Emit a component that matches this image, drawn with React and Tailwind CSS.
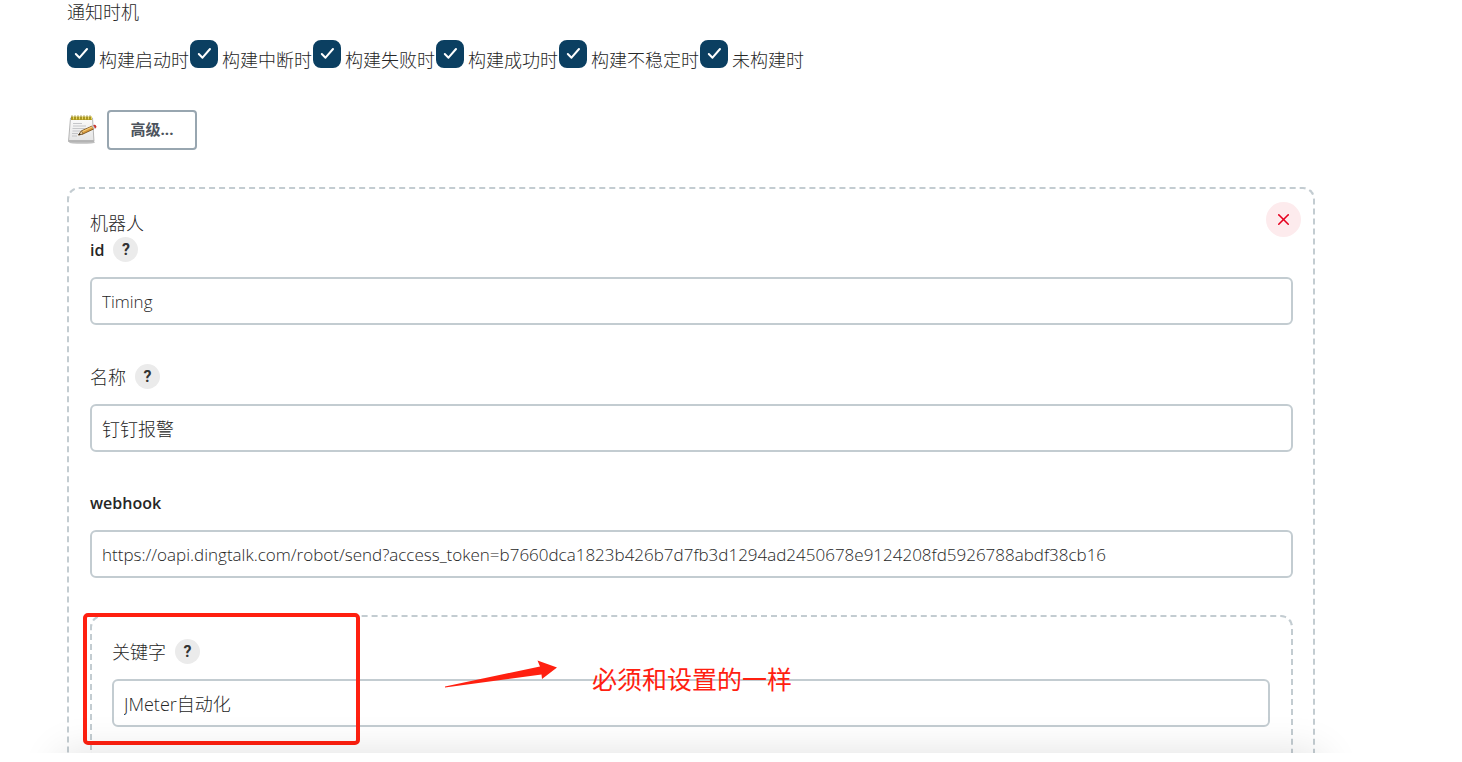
import React from 'react';
import { X } from 'lucide-react';

const triggers = [
  { id: 'start', label: '构建启动时' },
  { id: 'abort', label: '构建中断时' },
  { id: 'failure', label: '构建失败时' },
  { id: 'success', label: '构建成功时' },
  { id: 'unstable', label: '构建不稳定时' },
  { id: 'not-built', label: '未构建时' },
];

const TriggerCheckbox = ({ id, label }) => (
  <div className="flex gap-1">
    <span className="relative h-7 w-7 shrink-0">
      <input
        id={id}
        type="checkbox"
        defaultChecked
        className="peer block h-7 w-7 appearance-none rounded-lg border-2 border-[#c3ccd1] checked:border-[#0b3f61] checked:bg-[#0b3f61]"
      />
      <svg
        viewBox="0 0 28 28"
        fill="none"
        className="pointer-events-none absolute inset-0 hidden h-7 w-7 peer-checked:block"
      >
        <path d="M8.8 14l3.700 3.700 7.500-8.700" stroke="#fff" strokeWidth="2" strokeLinecap="round" strokeLinejoin="round" />
      </svg>
    </span>
    <label htmlFor={id} className="pt-2 leading-6 whitespace-nowrap">
      {label}
    </label>
  </div>
);

const NotepadIcon = () => (
  <svg viewBox="0 0 32 32" className="h-8 w-8 shrink-0">
    <defs>
      <linearGradient id="paper" x1="0" y1="0" x2="0" y2="1">
        <stop offset="0" stopColor="#fbfbfb" />
        <stop offset="1" stopColor="#e4e4e4" />
      </linearGradient>
    </defs>
    <ellipse cx="15" cy="28.500" rx="13" ry="1.300" fill="#000" opacity="0.25" />
    <path d="M3.500 4h22l1.500 23.500H1.500z" fill="url(#paper)" stroke="#a5a5a5" strokeWidth="0.8" />
    <path d="M2 26h24.900l.1 1.500H1.500z" fill="#b5b5b5" />
    <path d="M6 9.500h9M6 12h13M5.500 14.500h13M5.500 17h8M5 19.500h6M5 22h5" stroke="#bfc1c4" strokeWidth="0.9" />
    <path d="M4 3h21v3H4z" fill="#c9b32c" />
    <path d="M5 1.500v4.500M8 1.500v4.500M11 1.500v4.500M14 1.500v4.500M17 1.500v4.500M20 1.500v4.500M23 1.500v4.500" stroke="#96841a" strokeWidth="1.200" />
    <path d="M6.500 2v3M9.500 2v3M12.500 2v3M15.500 2v3M18.500 2v3M21.500 2v3M24.500 2v3" stroke="#efe07a" strokeWidth="0.8" />
    <path d="M11.500 21l3-4.200L25.200 12l1.600 2.900L16 20z" fill="#d99a3a" stroke="#6d4715" strokeWidth="0.8" />
    <path d="M15 17.700l10.500-4.900" stroke="#f5cf7e" strokeWidth="1.100" />
    <path d="M11.500 21l3-4.200L16 20z" fill="#ecd3a5" stroke="#6d4715" strokeWidth="0.6" />
    <path d="M11.500 21l1.300-1.900.9 1.500z" fill="#222" />
    <path d="M25 12l1.600-.7 1.600 2.900-1.600.7z" fill="#c7cbcf" />
    <path d="M26.600 11.300c2-1.100 3.700 1.900 1.600 2.900z" fill="#d8302b" stroke="#b0302a" strokeWidth="0.5" />
  </svg>
);

const HelpButton = ({ topic }) => (
  <button
    type="button"
    aria-label={`${topic} ?`}
    className="flex h-[25px] w-[25px] items-center justify-center rounded-full bg-[#ebebeb] font-[Roboto] text-base font-bold text-[#333333]"
  >
    ?
  </button>
);

const Field = ({ id, label, value, help, latin }) => (
  <div>
    <div className={help ? 'flex h-[27px] items-center gap-[9px]' : 'flex h-[26px] items-center'}>
      <label htmlFor={id} className={latin ? 'text-base font-semibold' : ''}>
        {label}
      </label>
      {help && <HelpButton topic={label} />}
    </div>
    <input
      id={id}
      type="text"
      defaultValue={value}
      className={`mt-[14px] block h-12 w-full rounded-md border-2 border-[#c3ccd1] bg-white px-[10px] outline-none focus:border-[#0b6aa2] ${
        latin ? 'text-[17px]' : 'text-lg'
      }`}
    />
  </div>
);

// red marker around the keyword field, with an arrow and a remark
const Annotation = () => (
  <div className="pointer-events-none absolute -top-1 -left-[9px] flex text-[#ff2010]">
    <div className="h-[132px] w-[277px] shrink-0 rounded-[5px] border-4 border-[#ff2010]" />
    <svg viewBox="0 0 114 30" className="mt-[46px] ml-[84px] h-[30px] w-[114px] shrink-0">
      <path d="M1 27.500L96 7.500 93.500 1.500 113 8.500 98 20 97.500 15.500 1 28.500z" fill="#ff2010" />
    </svg>
    <span className="mt-[50px] ml-[34px] text-[25px] leading-8 font-normal whitespace-nowrap">必须和设置的一样</span>
  </div>
);

export default function App() {
  return (
    <div className="overflow-hidden bg-white pr-[147px] pl-[67px] font-['Open_Sans','Noto_Sans_CJK_SC',sans-serif] text-lg font-light text-[#262626]">
      <h2 className="h-6 leading-6">通知时机</h2>
      <div className="mt-4 flex h-7 gap-px">
        {triggers.map((trigger) => (
          <TriggerCheckbox key={trigger.id} {...trigger} />
        ))}
      </div>

      <div className="mt-[42px] flex items-center gap-2">
        <NotepadIcon />
        <button
          type="button"
          className="h-10 w-[90px] rounded border-2 border-[#98a6b0] text-[15px] font-bold text-[#4d545d]"
        >
          高级...
        </button>
      </div>

      <section className="relative mt-[37px] rounded-t-xl border-2 border-b-0 border-dashed border-[#c3ccd1] pt-[21px] pr-5 pl-[21px]">
        <button
          type="button"
          aria-label="X"
          className="absolute top-[13px] right-3 flex h-[35px] w-[35px] items-center justify-center rounded-full bg-[#fdebed] text-[#e6001f]"
        >
          <X className="h-[19px] w-[19px]" strokeWidth={2} />
        </button>
        <h3 className="h-[26px] leading-[26px]">机器人</h3>
        <div className="flex flex-col gap-[38px]">
          <Field id="robot-id" label="id" value="Timing" help latin />
          <Field id="robot-name" label="名称" value="钉钉报警" help />
          <Field
            id="robot-webhook"
            label="webhook"
            value="https://oapi.dingtalk.com/robot/send?access_token=b7660dca1823b426b7d7fb3d1294ad2450678e9124208fd5926788abdf38cb16"
            latin
          />
        </div>
        <div className="relative mt-[37px] rounded-t-xl border-2 border-b-0 border-dashed border-[#c3ccd1] pt-[21px] pr-[21px] pb-[26px] pl-5">
          <Field id="robot-keyword" label="关键字" value="JMeter自动化" help />
          <Annotation />
        </div>
      </section>

      {/* top edge of the sticky save bar */}
      <div className="relative h-[9px] bg-white">
        <div className="pointer-events-none absolute -inset-x-2 top-0 h-20 rounded-xl bg-white shadow-[0_0_40px_rgba(0,0,0,0.12)]" />
        <div className="absolute inset-y-0 -right-[147px] -left-[67px] bg-white" />
      </div>
    </div>
  );
}
